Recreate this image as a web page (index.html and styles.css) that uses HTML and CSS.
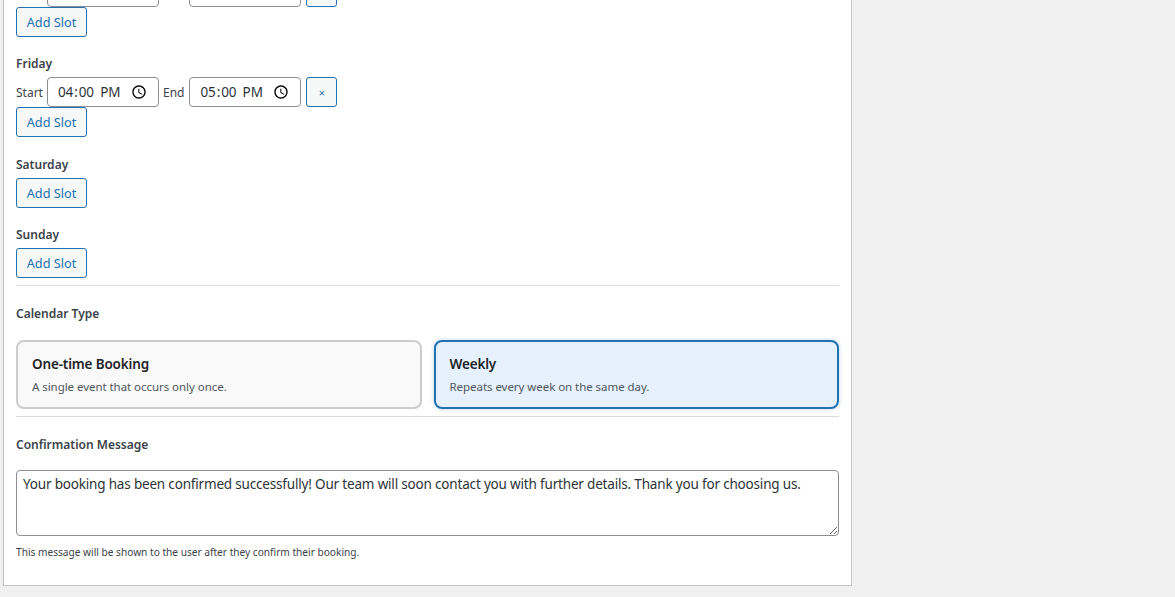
FILE: index.html
```html
<!DOCTYPE html>
<html lang="en">
<head>
  <meta charset="UTF-8">
  <title>Booking settings</title>
  <link rel="stylesheet" href="styles.css">
</head>
<body>
<div class="panel">
  <div class="day day-cut">
    <div class="slot">
      <span class="slot-label">Start</span>
      <input type="time" class="time-input" value="09:00">
      <span class="slot-label slot-label-end">End</span>
      <input type="time" class="time-input" value="10:00">
      <button class="button button-remove">×</button>
    </div>
    <button class="button">Add Slot</button>
  </div>

  <div class="day">
    <div class="day-name">Friday</div>
    <div class="slot">
      <span class="slot-label">Start</span>
      <input type="time" class="time-input" value="16:00">
      <span class="slot-label slot-label-end">End</span>
      <input type="time" class="time-input" value="17:00">
      <button class="button button-remove">×</button>
    </div>
    <button class="button">Add Slot</button>
  </div>

  <div class="day">
    <div class="day-name">Saturday</div>
    <button class="button">Add Slot</button>
  </div>

  <div class="day">
    <div class="day-name">Sunday</div>
    <button class="button">Add Slot</button>
  </div>

  <hr class="divider">

  <div class="field-title">Calendar Type</div>
  <div class="type-cards">
    <div class="type-card">
      <div class="type-name">One-time Booking</div>
      <div class="type-desc">A single event that occurs only once.</div>
    </div>
    <div class="type-card selected">
      <div class="type-name">Weekly</div>
      <div class="type-desc">Repeats every week on the same day.</div>
    </div>
  </div>

  <hr class="divider divider-tight">

  <div class="field-title field-title-message">Confirmation Message</div>
  <textarea class="message">Your booking has been confirmed successfully! Our team will soon contact you with further details. Thank you for choosing us.</textarea>
  <p class="help">This message will be shown to the user after they confirm their booking.</p>
</div>
</body>
</html>
```

FILE: styles.css
```css
html, body {
  height: 597px;
  overflow: hidden;
}
body {
  margin: 0;
  background: #f0f0f1;
  color: #3c434a;
  font-family: "Noto Sans", "Open Sans", sans-serif;
  font-size: 13px;
  line-height: 18px;
}
.panel {
  box-sizing: border-box;
  width: 849px;
  height: 610px;
  margin: -24px 0 0 3px;
  padding: 0 12px;
  background: #fff;
  border: 1px solid #c3c4c7;
}
.day {
  margin-bottom: 17.4px;
}
.day-name {
  margin-bottom: 4px;
  padding-top: 1px;
  font-size: 12px;
  font-weight: 600;
}
.slot {
  display: flex;
  align-items: center;
  height: 30px;
}
.slot-label {
  margin-right: 4px;
  padding-top: 1px;
  font-size: 12px;
}
.slot-label-end {
  margin-right: 5px;
}
.time-input {
  box-sizing: border-box;
  width: 112px;
  height: 30px;
  margin-right: 4px;
  padding: 0 4px 0 9px;
  background: #fff;
  border: 1px solid #8c8f94;
  border-radius: 4px;
  color: #2c3338;
  font-family: inherit;
  font-size: 13.5px;
  letter-spacing: -0.1px;
}
.time-input::-webkit-datetime-edit-ampm-field {
  margin-left: 2px;
}
.time-input::-webkit-calendar-picker-indicator {
  width: 16px;
  height: 16px;
  margin-right: 4px;
  margin-left: 0;
  filter: contrast(2);
}
.button {
  display: block;
  box-sizing: border-box;
  width: 71px;
  height: 30px;
  padding: 0;
  background: #f6f7f7;
  border: 1px solid #2271b1;
  border-radius: 3px;
  color: #2271b1;
  font-family: inherit;
  font-size: 12.7px;
}
.button-remove {
  width: 31px;
  margin-left: 1px;
  padding: 0;
  font-size: 11px;
}
.divider {
  height: 1px;
  margin: -10.6px 0 0;
  background: #dcdcde;
  border: 0;
}
.divider-tight {
  margin-top: 7px;
}
.field-title {
  margin: 19px 0 17px;
  font-size: 12px;
  font-weight: 600;
}
.field-title-message {
  margin-bottom: 16px;
}
.type-cards {
  display: grid;
  grid-template-columns: 1fr 1fr;
  gap: 12px;
}
.type-card {
  box-sizing: border-box;
  height: 69px;
  padding: 13px 14px;
  background: #f9f9f9;
  border: 2px solid #ccc;
  border-radius: 8px;
}
.type-card.selected {
  background: #e6f1fd;
  border-color: #2271b1;
  box-shadow: 0 0 4px rgba(34, 113, 177, 0.3);
}
.type-name {
  margin-bottom: 5px;
  color: #1d2327;
  font-size: 13.5px;
  font-weight: 600;
  letter-spacing: -0.16px;
}
.type-desc {
  color: #50575e;
  font-size: 11.5px;
  letter-spacing: -0.05px;
}
.message {
  display: block;
  box-sizing: border-box;
  width: 100%;
  height: 66px;
  padding: 3px 6px;
  background: #fff;
  border: 1px solid #8c8f94;
  border-radius: 4px;
  color: #2c3338;
  font-family: inherit;
  font-size: 13.5px;
  letter-spacing: -0.18px;
  line-height: 20px;
}
.help {
  margin: 8px 0 0;
  font-size: 10.15px;
  line-height: 16px;
}
```
